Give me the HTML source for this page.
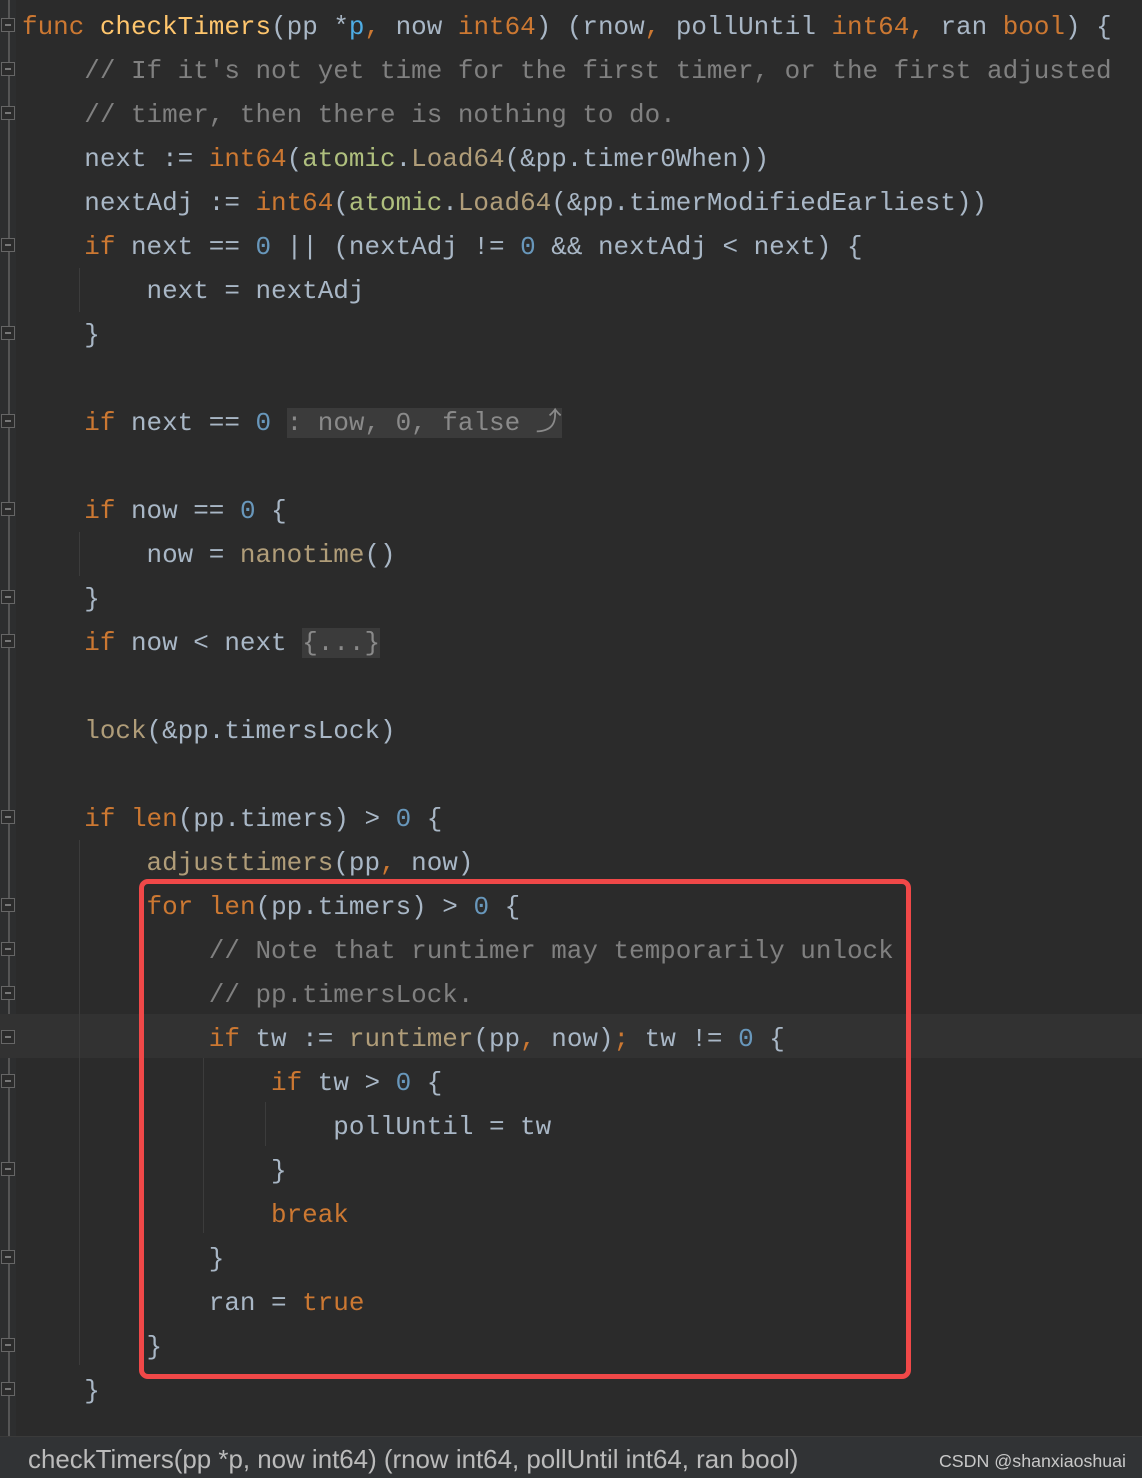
<!DOCTYPE html>
<html><head><meta charset="utf-8"><style>
html,body{margin:0;padding:0;background:#2b2b2b;width:1142px;height:1478px;overflow:hidden;position:relative}
.l{position:absolute;left:22px;height:44px;line-height:44px;white-space:pre;font-family:"Liberation Mono","DejaVu Sans Mono",monospace;font-size:25.95px;color:#a9b7c6}
.k{color:#cc7832}.f{color:#ffc66d}.n{color:#6897bb}.c{color:#808080}.t{color:#4eade5}.g{color:#b09d79}.a{color:#afbf7e}
.fold{background:#3b3b3b;color:#8a8a8a}
.gut{position:absolute;left:0;top:0;width:16px;height:1436px;background:#2d2e2f}
.vl{position:absolute;left:8px;top:0;width:2px;height:1436px;background:#555}
.ig{position:absolute;width:1px;background:#3c3c3c}
.mk{position:absolute;left:1px;width:14px;height:14px;border:1.5px solid #666;box-sizing:border-box;background:#2b2b2b}
.mk:after{content:"";position:absolute;left:3px;top:5px;width:6px;height:1.5px;background:#777}
</style></head><body>
<div class="gut"></div>
<div class="vl"></div>
<div style="position:absolute;left:0;top:1014px;width:1142px;height:44px;background:#323232"></div>
<div class="mk" style="top:62px"></div><div class="mk" style="top:106px"></div>
<div class="mk" style="top:238px"></div><div class="mk" style="top:326px"></div>
<div class="mk" style="top:414px"></div><div class="mk" style="top:502px"></div>
<div class="mk" style="top:590px"></div><div class="mk" style="top:634px"></div>
<div class="mk" style="top:810px"></div><div class="mk" style="top:898px"></div>
<div class="mk" style="top:942px"></div><div class="mk" style="top:986px"></div>
<div class="mk" style="top:1030px"></div><div class="mk" style="top:1074px"></div>
<div class="mk" style="top:1162px"></div><div class="mk" style="top:1250px"></div>
<div class="mk" style="top:1338px"></div><div class="mk" style="top:1382px"></div>
<div class="mk" style="top:18px"></div>
<div class="ig" style="left:79px;top:268px;height:44px"></div>
<div class="ig" style="left:79px;top:532px;height:44px"></div>
<div class="ig" style="left:79px;top:840px;height:525px"></div>
<div class="ig" style="left:203px;top:1058px;height:175px"></div>
<div class="ig" style="left:265px;top:1102px;height:44px"></div>
<div class="l" style="top:5px"><span class="k">func</span> <span class="f">checkTimers</span>(pp *<span class="t">p</span><span class="k">,</span> now <span class="k">int64</span>) (rnow<span class="k">,</span> pollUntil <span class="k">int64</span><span class="k">,</span> ran <span class="k">bool</span>) {</div>
<div class="l c" style="top:49px">    // If it's not yet time for the first timer, or the first adjusted</div>
<div class="l c" style="top:93px">    // timer, then there is nothing to do.</div>
<div class="l" style="top:137px">    next := <span class="k">int64</span>(<span class="a">atomic</span>.<span class="g">Load64</span>(&amp;pp.timer0When))</div>
<div class="l" style="top:181px">    nextAdj := <span class="k">int64</span>(<span class="a">atomic</span>.<span class="g">Load64</span>(&amp;pp.timerModifiedEarliest))</div>
<div class="l" style="top:225px">    <span class="k">if</span> next == <span class="n">0</span> || (nextAdj != <span class="n">0</span> &amp;&amp; nextAdj &lt; next) {</div>
<div class="l" style="top:269px">        next = nextAdj</div>
<div class="l" style="top:313px">    }</div>
<div class="l" style="top:401px">    <span class="k">if</span> next == <span class="n">0</span> <span class="fold">: now, 0, false ⤴</span></div>
<div class="l" style="top:489px">    <span class="k">if</span> now == <span class="n">0</span> {</div>
<div class="l" style="top:533px">        now = <span class="g">nanotime</span>()</div>
<div class="l" style="top:577px">    }</div>
<div class="l" style="top:621px">    <span class="k">if</span> now &lt; next <span class="fold">{...}</span></div>
<div class="l" style="top:709px">    <span class="g">lock</span>(&amp;pp.timersLock)</div>
<div class="l" style="top:797px">    <span class="k">if</span> <span class="k">len</span>(pp.timers) &gt; <span class="n">0</span> {</div>
<div class="l" style="top:841px">        <span class="g">adjusttimers</span>(pp<span class="k">,</span> now)</div>
<div class="l" style="top:885px">        <span class="k">for</span> <span class="k">len</span>(pp.timers) &gt; <span class="n">0</span> {</div>
<div class="l c" style="top:929px">            // Note that runtimer may temporarily unlock</div>
<div class="l c" style="top:973px">            // pp.timersLock.</div>
<div class="l" style="top:1017px">            <span class="k">if</span> tw := <span class="g">runtimer</span>(pp<span class="k">,</span> now)<span class="k">;</span> tw != <span class="n">0</span> {</div>
<div class="l" style="top:1061px">                <span class="k">if</span> tw &gt; <span class="n">0</span> {</div>
<div class="l" style="top:1105px">                    pollUntil = tw</div>
<div class="l" style="top:1149px">                }</div>
<div class="l" style="top:1193px">                <span class="k">break</span></div>
<div class="l" style="top:1237px">            }</div>
<div class="l" style="top:1281px">            ran = <span class="k">true</span></div>
<div class="l" style="top:1325px">        }</div>
<div class="l" style="top:1369px">    }</div>
<div style="position:absolute;left:139px;top:879px;width:772px;height:500px;border:5px solid #f04848;border-radius:9px;box-sizing:border-box"></div>
<div style="position:absolute;left:0;top:1436px;width:1142px;height:42px;background:#313335;border-top:1px solid #3a3a3a"></div>
<div style="position:absolute;left:28px;top:1439px;line-height:42px;font-family:'Liberation Sans',sans-serif;font-size:25.9px;color:#bbbbbb;white-space:pre">checkTimers(pp *p, now int64) (rnow int64, pollUntil int64, ran bool)</div>
<div style="position:absolute;right:16px;top:1440px;line-height:42px;font-family:'Liberation Sans',sans-serif;font-size:17.8px;color:#c8c8c8">CSDN @shanxiaoshuai</div>
</body></html>
